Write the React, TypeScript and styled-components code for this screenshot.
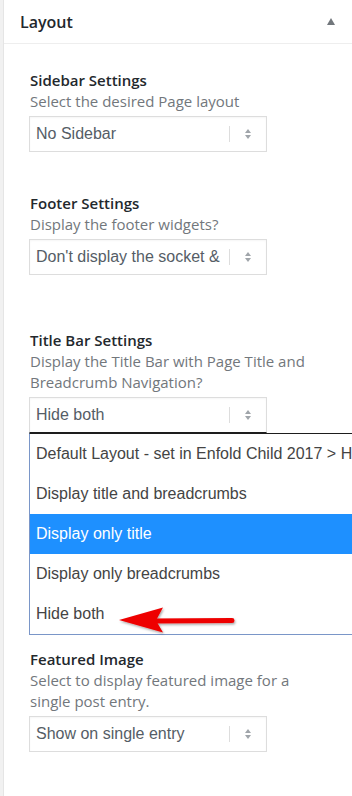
import React from 'react';
import styled, { createGlobalStyle } from 'styled-components';

const GlobalStyle = createGlobalStyle`
  html, body {
    margin: 0;
    padding: 0;
    background: #f1f1f1;
    overflow: hidden;
  }
`;

const Page = styled.div`
  position: relative;
  width: 352px;
  height: 796px;
  overflow: hidden;
  font-family: 'Open Sans', 'Noto Sans', sans-serif;
`;

const Panel = styled.div`
  margin-left: 3px;
  min-height: 796px;
  background: #fff;
  border-left: 1px solid #e5e5e5;
`;

const PanelHeader = styled.div`
  display: flex;
  align-items: center;
  justify-content: space-between;
  height: 43px;
  padding: 0 17px 0 16px;
  border-bottom: 1px solid #eeeeee;
`;

const PanelTitle = styled.h2`
  margin: 0;
  font-size: 16px;
  font-weight: 600;
  color: #23282d;
`;

const Toggle = styled.span`
  width: 0;
  height: 0;
  border-left: 4.5px solid transparent;
  border-right: 4.5px solid transparent;
  border-bottom: 7px solid #72777c;
  margin-top: -1px;
`;

const PanelBody = styled.div`
  padding: 26px 22px 0 25px;
`;

const Field = styled.div<{ $gap: number }>`
  margin-bottom: ${(p) => p.$gap}px;
`;

const Label = styled.div`
  padding-left: 1px;
  font-size: 15px;
  line-height: 21px;
  font-weight: 600;
  color: #23282d;
`;

const Description = styled.div`
  max-width: 288px;
  padding-left: 1px;
  font-size: 15px;
  line-height: 21px;
  color: #72777c;
`;

const Select = styled.div<{ $focused?: boolean }>`
  display: flex;
  align-items: center;
  box-sizing: border-box;
  width: 238px;
  height: 36px;
  margin-top: 4px;
  padding-left: 6px;
  background: #fff;
  border: 1px solid #dddddd;
  border-bottom-color: ${(p) => (p.$focused ? '#1d1d1d' : '#dddddd')};
  box-shadow: inset 0 1px 2px rgba(0, 0, 0, 0.04);
  font-family: 'Liberation Sans', Arial, sans-serif;
  font-size: 16px;
  color: #555d66;
`;

const SelectValue = styled.span`
  flex: 1;
  margin-right: 6px;
  white-space: nowrap;
  overflow: hidden;
`;

const SelectDivider = styled.span`
  width: 1px;
  height: 16px;
  background: #dddddd;
`;

const SelectArrows = styled.span`
  display: flex;
  flex-direction: column;
  align-items: center;
  gap: 2px;
  width: 36px;

  i {
    width: 0;
    height: 0;
    border-left: 3.5px solid transparent;
    border-right: 3.5px solid transparent;
  }
  i:first-child {
    border-bottom: 4px solid #a0a5aa;
  }
  i:last-child {
    border-top: 4px solid #a0a5aa;
  }
`;

const Listbox = styled.ul`
  list-style: none;
  margin: 0;
  padding: 0;
  width: 340px;
  border: 1px solid #7a96c8;
  border-top-color: #1d1d1d;
  background: #fff;
`;

const Option = styled.li<{ $selected?: boolean }>`
  height: 40px;
  display: flex;
  align-items: center;
  padding-left: 6px;
  white-space: nowrap;
  font-family: 'Liberation Sans', Arial, sans-serif;
  font-size: 16px;
  color: ${(p) => (p.$selected ? '#fff' : '#444')};
  background: ${(p) => (p.$selected ? '#1e90ff' : 'transparent')};
`;

const Annotation = styled.svg`
  position: absolute;
  left: 0;
  top: 0;
  pointer-events: none;
`;

function SelectBox(props: { value: string; focused?: boolean }) {
  return (
    <Select $focused={props.focused}>
      <SelectValue>{props.value}</SelectValue>
      <SelectDivider />
      <SelectArrows>
        <i />
        <i />
      </SelectArrows>
    </Select>
  );
}

const titleOptions = [
  'Default Layout - set in Enfold Child 2017 > Header',
  'Display title and breadcrumbs',
  'Display only title',
  'Display only breadcrumbs',
  'Hide both',
];

export default function App() {
  return (
    <Page>
      <GlobalStyle />
      <Panel>
        <PanelHeader>
          <PanelTitle>Layout</PanelTitle>
          <Toggle />
        </PanelHeader>
        <PanelBody>
          <Field $gap={41}>
            <Label>Sidebar Settings</Label>
            <Description>Select the desired Page layout</Description>
            <SelectBox value="No Sidebar" />
          </Field>
          <Field $gap={55}>
            <Label>Footer Settings</Label>
            <Description>Display the footer widgets?</Description>
            <SelectBox value="Don't display the socket & footer widgets" />
          </Field>
          <Field $gap={14}>
            <Label>Title Bar Settings</Label>
            <Description>
              Display the Title Bar with Page Title and Breadcrumb Navigation?
            </Description>
            <SelectBox value="Hide both" focused />
            <Listbox>
              {titleOptions.map((o) => (
                <Option key={o} $selected={o === 'Display only title'}>
                  {o}
                </Option>
              ))}
            </Listbox>
          </Field>
          <Field $gap={0}>
            <Label>Featured Image</Label>
            <Description>
              Select to display featured image for a single post entry.
            </Description>
            <SelectBox value="Show on single entry" />
          </Field>
        </PanelBody>
      </Panel>
      <Annotation width="352" height="796" viewBox="0 0 352 796">
        <defs>
          <filter id="shadow" x="-20%" y="-50%" width="140%" height="200%">
            <feDropShadow dx="1" dy="1.5" stdDeviation="1.2" floodColor="#000" floodOpacity="0.35" />
          </filter>
        </defs>
        <g filter="url(#shadow)" fill="#ee0000" stroke="none">
          <path d="M119 620 L163 607.5 L156 620.5 L163 632.5 Z" />
          <line x1="152" y1="621" x2="232" y2="620.5" stroke="#ee0000" strokeWidth="5" strokeLinecap="round" />
        </g>
      </Annotation>
    </Page>
  );
}
